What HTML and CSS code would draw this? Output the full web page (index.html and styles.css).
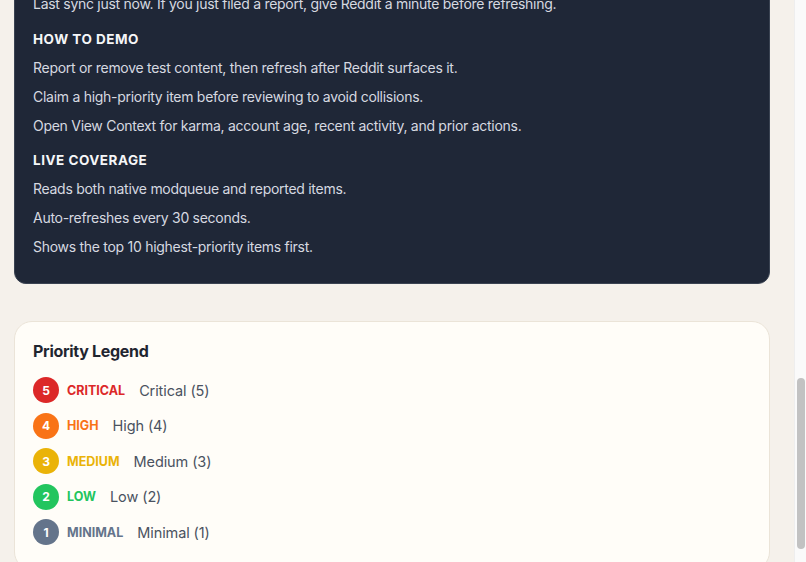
FILE: index.html
```html
<!DOCTYPE html>
<html lang="en">
<head>
<meta charset="utf-8">
<title>Mod Queue Guide</title>
<link rel="stylesheet" href="styles.css">
</head>
<body>
<main class="page">
  <section class="guide">
    <p class="line">Last sync just now. If you just filed a report, give Reddit a minute before refreshing.</p>
    <div class="group">
      <h3 class="group-title">How to demo</h3>
      <p class="line">Report or remove test content, then refresh after Reddit surfaces it.</p>
      <p class="line">Claim a high-priority item before reviewing to avoid collisions.</p>
      <p class="line">Open View Context for karma, account age, recent activity, and prior actions.</p>
    </div>
    <div class="group">
      <h3 class="group-title">Live coverage</h3>
      <p class="line">Reads both native modqueue and reported items.</p>
      <p class="line">Auto-refreshes every 30 seconds.</p>
      <p class="line">Shows the top 10 highest-priority items first.</p>
    </div>
  </section>

  <section class="legend">
    <h2 class="legend-title">Priority Legend</h2>
    <ul class="legend-list">
      <li class="legend-item"><span class="dot critical">5</span><span class="tag critical-text">CRITICAL</span><span class="desc">Critical (5)</span></li>
      <li class="legend-item"><span class="dot high">4</span><span class="tag high-text">HIGH</span><span class="desc">High (4)</span></li>
      <li class="legend-item"><span class="dot medium">3</span><span class="tag medium-text">MEDIUM</span><span class="desc">Medium (3)</span></li>
      <li class="legend-item"><span class="dot low">2</span><span class="tag low-text">LOW</span><span class="desc">Low (2)</span></li>
      <li class="legend-item"><span class="dot minimal">1</span><span class="tag minimal-text">MINIMAL</span><span class="desc">Minimal (1)</span></li>
    </ul>
  </section>
</main>
<div class="scrollbar"><div class="scroll-thumb"></div></div>
</body>
</html>
```

FILE: styles.css
```css
* { box-sizing: border-box; }

html, body {
  margin: 0;
  padding: 0;
  height: 100%;
  overflow: hidden;
}

body {
  background: #f5f1eb;
  font-family: Inter, "Noto Sans", "Liberation Sans", sans-serif;
  -webkit-font-smoothing: antialiased;
}

.page {
  width: 794px;
  padding: 0 24px 0 14px;
  margin-top: -25px;
  display: flex;
  flex-direction: column;
  gap: 37px;
}

.guide {
  background: #1f2737;
  border: 1px solid #3a4352;
  border-radius: 12px;
  padding: 18px 18px 26px;
  display: flex;
  flex-direction: column;
  gap: 15px;
}

.group {
  display: flex;
  flex-direction: column;
  gap: 9px;
}

.group + .group { margin-top: -1px; }

.line {
  margin: 0;
  font-size: 14px;
  line-height: 20px;
  letter-spacing: -0.28px;
  color: #d6d9e0;
}

.group-title {
  margin: 0;
  font-size: 13.5px;
  line-height: 20px;
  font-weight: 700;
  letter-spacing: 0.5px;
  text-transform: uppercase;
  color: #f5f6f8;
}

.legend {
  background: #fffdf8;
  border: 1px solid #ebe4d8;
  border-radius: 18px;
  padding: 17px 18px 24px;
}

.legend-title {
  margin: 0 0 14px;
  font-size: 16px;
  line-height: 24px;
  font-weight: 700;
  letter-spacing: -0.3px;
  color: #1f2530;
}

.legend-list {
  list-style: none;
  margin: 0;
  padding: 0;
  display: flex;
  flex-direction: column;
  gap: 9.5px;
}

.legend-item {
  display: flex;
  align-items: center;
  height: 26px;
}

.dot {
  width: 26px;
  height: 26px;
  border-radius: 50%;
  display: flex;
  align-items: center;
  justify-content: center;
  color: #ffffff;
  font-size: 12px;
  font-weight: 700;
  margin-right: 8px;
  flex: none;
}

.tag {
  font-size: 12.5px;
  font-weight: 700;
  letter-spacing: 0;
  margin-right: 14px;
}

.desc {
  font-size: 14.5px;
  letter-spacing: -0.1px;
  color: #4a5260;
}

.critical { background: #dc2828; }
.high { background: #f97316; }
.medium { background: #eab308; }
.low { background: #22c55e; }
.minimal { background: #64748b; }

.critical-text { color: #dc2828; }
.high-text { color: #f97316; }
.medium-text { color: #eab308; }
.low-text { color: #22c55e; }
.minimal-text { color: #64748b; }

.scrollbar {
  position: fixed;
  top: 0;
  right: 0;
  width: 12px;
  height: 100%;
  background: #fafafa;
  border-left: 1px solid #eeeeee;
}

.scroll-thumb {
  position: absolute;
  top: 378px;
  left: 2px;
  width: 8px;
  height: 171px;
  border-radius: 4px;
  background: #c2c2c2;
}
```
